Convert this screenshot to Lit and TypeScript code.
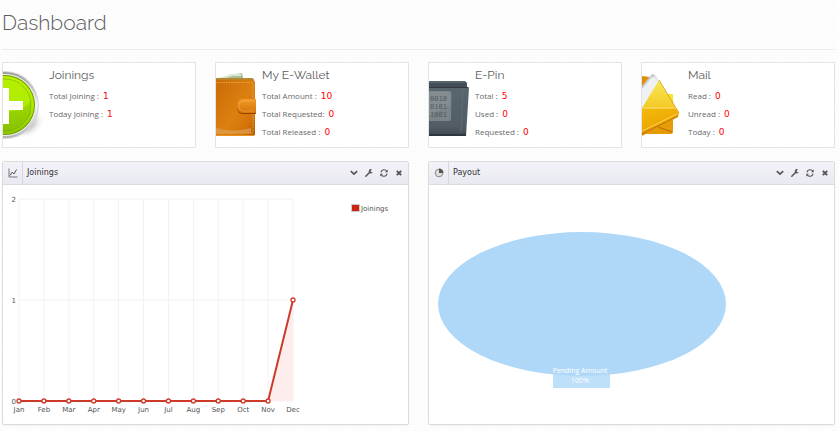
import { LitElement, html, css, svg, TemplateResult } from "lit";
import { customElement, property } from "lit/decorators.js";

type Stat = { label: string; value: number };

const plusArt = svg`
  <defs>
    <linearGradient id="rim" x1="0" y1="0" x2="0" y2="1"><stop offset="0" stop-color="#9a9a9a"/><stop offset=".5" stop-color="#f4f4f4"/><stop offset="1" stop-color="#b4b4b4"/></linearGradient>
    <linearGradient id="lime" x1="0" y1="0" x2="0" y2="1"><stop offset="0" stop-color="#b8f000"/><stop offset=".5" stop-color="#aeec00"/><stop offset="1" stop-color="#8cc800"/></linearGradient>
    <radialGradient id="shade"><stop offset=".5" stop-color="#bbb"/><stop offset="1" stop-color="#fff" stop-opacity="0"/></radialGradient>
  </defs>
  <ellipse cx="17" cy="58" rx="25" ry="18" fill="url(#shade)"/>
  <circle cx="2" cy="42" r="34" fill="#d6d6d6"/>
  <circle cx="2" cy="42" r="33" fill="url(#rim)"/>
  <circle cx="2" cy="42" r="31" fill="#f2f2f2"/>
  <circle cx="2" cy="42" r="30" fill="#6f9c00"/>
  <circle cx="2" cy="42" r="29" fill="url(#lime)"/>
  <circle cx="2" cy="42" r="26" fill="none" stroke="#7fb000" stroke-opacity=".6"/>
  <path d="M0 48C12 50 22 46 28 38V50Q20 66 0 70Z" fill="#78aa00" opacity=".3"/>
  <path d="M0 25H6V38H20V47H6V61H0Z" fill="#fff"/>`;

const walletArt = svg`
  <defs>
    <linearGradient id="hide" x1="0" y1="0" x2="1" y2="1"><stop offset="0" stop-color="#ca6c08"/><stop offset=".55" stop-color="#dc8010"/><stop offset=".8" stop-color="#d47408"/><stop offset="1" stop-color="#b45a04"/></linearGradient>
    <linearGradient id="strap" x1="0" y1="0" x2="0" y2="1"><stop offset="0" stop-color="#f09a2a"/><stop offset="1" stop-color="#d87406"/></linearGradient>
  </defs>
  <path d="M0 17L14 12L26 10L28 18Z" fill="#a9bda0"/>
  <path d="M3 16L16 12L25 12" fill="none" stroke="#dde8d2" stroke-width="2"/>
  <path d="M0 15H36Q38 15 38 18V21H0Z" fill="#b8862c"/>
  <path d="M0 17H36Q39 17 39 20V71Q39 73 37 73H0Z" fill="url(#hide)"/>
  <path d="M0 19.500H35Q37 19.500 37 22V68Q37 70.500 35 70.500H0" fill="none" stroke="#f0ae50" stroke-width=".8" stroke-dasharray="1.500 1"/>
  <path d="M0 65Q18 70 35 65V70H0Z" fill="#e0a868" opacity=".6"/>
  <path d="M0 72.500H38" stroke="#e99322"/>
  <path d="M40 37H26Q21 38 21 44Q21 50 26 51H40Z" fill="#8c4303"/>
  <path d="M40 36H26Q21 37 21 43Q21 49 26 50H40Z" fill="url(#strap)"/>
  <path d="M38 38H27Q23 39 23 43Q23 47 27 48H38" fill="none" stroke="#f8c070" stroke-width=".7" stroke-dasharray="1.500 1"/>`;

const pinArt = svg`
  <defs>
    <linearGradient id="slate" x1="0" y1="0" x2="0" y2="1"><stop offset="0" stop-color="#5a666d"/><stop offset=".8" stop-color="#515c64"/><stop offset="1" stop-color="#3d484f"/></linearGradient>
  </defs>
  <path d="M0 18H36L38 20V24H0Z" fill="#434e56"/>
  <path d="M0 19H36" stroke="#6d7a82"/>
  <path d="M0 25H40L37 73H0Z" fill="url(#slate)"/>
  <path d="M0 24.500H39.500" stroke="#2f383e"/>
  <path d="M34 27L32 70" stroke="#626e76" stroke-width=".8"/>
  <path d="M0 72H37" stroke="#2e373d" stroke-width="2"/>
  <path d="M0 28H20Q22.500 28 22.500 30.500L22 56Q22 58 20 58H0Z" fill="#7a858a"/>
  <path d="M0 29H20Q21.500 29 21.500 31L21 42L0 52Z" fill="#8a9498" opacity=".6"/>
  <g class="digits"><text x="1" y="38">0010</text><text x="1" y="46">0101</text><text x="1" y="54">1001</text></g>`;

const mailArt = svg`
  <defs>
    <linearGradient id="flap" x1="0" y1="0" x2="0" y2="1"><stop offset="0" stop-color="#f6ea58"/><stop offset="1" stop-color="#f4c31c"/></linearGradient>
    <linearGradient id="front" x1="0" y1="0" x2=".4" y2="1"><stop offset="0" stop-color="#f3bb0c"/><stop offset=".6" stop-color="#eeaa04"/><stop offset="1" stop-color="#dc8800"/></linearGradient>
  </defs>
  <path d="M18 31H31V69Q31 71 29 71H0V55Z" fill="#e69b08"/>
  <path d="M22 31H31V38H24Z" fill="#f2ea30"/>
  <path d="M10 62L30 69M18 60L31 52" stroke="#b86b00" fill="none"/>
  <path d="M0 13L8 14L0 26Z" fill="#dd8f08"/>
  <path d="M0 25L10 11L14 12L22 30V47H0Z" fill="#e6e8ec"/>
  <path d="M0 23L10 11L13 12L0 31Z" fill="#c8ccd2"/>
  <path d="M0 26L10 14L15 17V44H0Z" fill="#eff1f4"/>
  <path d="M17 17L37 50L0 46V45Z" fill="url(#flap)"/>
  <path d="M17 17L37 50" stroke="#d99a0a" stroke-width=".8"/>
  <path d="M0 45H34L37 50L36 54L0 73Z" fill="url(#front)"/>
  <path d="M0 45H34" stroke="#fbe07a"/>
  <path d="M0 71L36 53" stroke="#b96f00"/>
  <path d="M0 68L35 51" stroke="#f9d255"/>`;

const cards: { title: string; art: TemplateResult; stats: Stat[] }[] = [
  { title: "Joinings", art: plusArt, stats: [{ label: "Total Joining : ", value: 1 }, { label: "Today Joining : ", value: 1 }] },
  { title: "My E-Wallet", art: walletArt, stats: [{ label: "Total Amount : ", value: 10 }, { label: "Total Requested: ", value: 0 }, { label: "Total Released : ", value: 0 }] },
  { title: "E-Pin", art: pinArt, stats: [{ label: "Total : ", value: 5 }, { label: "Used : ", value: 0 }, { label: "Requested : ", value: 0 }] },
  { title: "Mail", art: mailArt, stats: [{ label: "Read : ", value: 0 }, { label: "Unread : ", value: 0 }, { label: "Today : ", value: 0 }] },
];

@customElement("stat-card")
export class StatCard extends LitElement {
  @property() heading = "";
  @property({ attribute: false }) art?: TemplateResult;
  @property({ attribute: false }) stats: Stat[] = [];

  static styles = css`
    :host { display: flex; background: #fff; border: 1px solid #e4e4e4; overflow: hidden; }
    .art { flex: none; width: 46px; height: 84px; }
    .digits { font: 7px "DejaVu Sans Mono", monospace; fill: #505b62; }
    .body { min-width: 0; }
    .title { margin: 4px 0 7px; font: 400 12px/16px Raleway, Lato, sans-serif; color: #5c5c5c; }
    .stats { margin: 0; padding: 0; list-style: none; display: grid; gap: 6px; color: #686868; white-space: nowrap; font: 8px/12px "Open Sans", sans-serif; }
    .value { margin-left: 2px; color: #f00; font: 9px/12px "DejaVu Sans", sans-serif; }
  `;

  render() {
    return html`
      <svg class="art" viewBox="0 0 46 84" aria-hidden="true">${this.art}</svg>
      <div class="body">
        <h2 class="title">${this.heading}</h2>
        <ul class="stats">
          ${this.stats.map((s) => html`<li>${s.label}<span class="value">${s.value}</span></li>`)}
        </ul>
      </div>`;
  }
}

const tools = [
  { name: "Collapse", icon: svg`<path d="M1.800 3.200L5 6.200L8.200 3.200" fill="none" stroke="#555" stroke-width="1.700"/>` },
  { name: "Settings", icon: svg`<path d="M1.800 8.200L6 4" fill="none" stroke="#555" stroke-width="1.500" stroke-linecap="round"/><path d="M8 1.500A2.100 2.100 0 1 0 8.800 4L7.200 4.200L6.300 3.200Z" fill="#555"/>` },
  { name: "Refresh", icon: svg`<path d="M1.900 4.300A3.200 3.200 0 0 1 7.800 3.300M8.100 5.700A3.200 3.200 0 0 1 2.200 6.700" fill="none" stroke="#555" stroke-width="1.100"/><path d="M8.700 1.500V4.200H6ZM1.300 8.500V5.800H4Z" fill="#555"/>` },
  { name: "Close", icon: svg`<path d="M2.800 2.800L7.200 7.200M7.200 2.800L2.800 7.200" fill="none" stroke="#555" stroke-width="1.900"/>` },
];

@customElement("dash-panel")
export class DashPanel extends LitElement {
  @property() heading = "";
  @property({ attribute: false }) icon?: TemplateResult;

  static styles = css`
    :host { display: block; background: #fff; border: 1px solid #dcdcdc; border-radius: 2px; box-shadow: 0 1px 1px #0000000d; overflow: hidden; }
    .head { display: flex; align-items: center; height: 22px; border-bottom: 1px solid #dcdce0; background: linear-gradient(#f3f3f9, #e9e9f1); }
    .badge { display: grid; place-items: center; align-self: stretch; width: 19px; border-right: 1px solid #d6d6dc; }
    .glyph { width: 10px; height: 10px; display: block; }
    .title { flex: 1; margin: 0 0 0 4px; font: 400 8px/14px "DejaVu Sans", sans-serif; color: #333; }
    .tools { display: flex; gap: 5px; padding-right: 4px; }
    .tool { padding: 0; border: 0; background: none; cursor: pointer; }
  `;

  render() {
    return html`
      <header class="head">
        <span class="badge"><svg class="glyph" viewBox="0 0 10 10" aria-hidden="true">${this.icon}</svg></span>
        <h2 class="title">${this.heading}</h2>
        <div class="tools">
          ${tools.map((t) => html`<button class="tool" aria-label=${t.name}><svg class="glyph" viewBox="0 0 10 10">${t.icon}</svg></button>`)}
        </div>
      </header>
      <slot></slot>`;
  }
}

const lineIcon = svg`<path d="M1 .500V9H9.500" fill="none" stroke="#777"/><path d="M2 7.500L4.200 4L6 6L8.500 1.500" fill="none" stroke="#555"/>`;
const pieIcon = svg`<circle cx="5" cy="5" r="3.800" fill="#ddd" stroke="#888"/><path d="M5 5V.500A4.500 4.500 0 0 1 9.500 5Z" fill="#555"/>`;

const months = ["Jan", "Feb", "Mar", "Apr", "May", "Jun", "Jul", "Aug", "Sep", "Oct", "Nov", "Dec"];
const joinings = [0, 0, 0, 0, 0, 0, 0, 0, 0, 0, 0, 1];
const px = (i: number) => 16 + (i * 274) / 11;
const py = (v: number) => 216 - v * 101;
const points = joinings.map((v, i) => `${px(i)},${py(v)}`).join(" ");

@customElement("app-root")
export class AppRoot extends LitElement {
  static styles = css`
    :host {
      display: block; min-height: 100vh; box-sizing: border-box; padding: 0 4px 6px 2px;
      background: radial-gradient(circle, #f8f8f8 0 1px, #fdfdfd 1px) 0 0 / 3px 3px;
    }
    .heading { margin: 0; padding: 8px 0 11px; border-bottom: 1px solid #ececec; font: 300 21px/30px Raleway, Lato, sans-serif; color: #5c5c5c; }
    .cards { display: grid; grid-template-columns: repeat(4, 1fr); gap: 19px; margin-top: 12px; }
    .panels { display: grid; grid-template-columns: repeat(2, 1fr); gap: 19px; margin-top: 13px; }
    .chart { display: block; width: 100%; height: auto; font: 7px "DejaVu Sans", sans-serif; fill: #545454; }
    .grid { stroke: #f2f2f2; fill: none; }
    .area { fill: #fdeeed; }
    .line { fill: none; stroke: #cf3a28; stroke-width: 2; stroke-linejoin: round; }
    .dot { fill: #fff; stroke: #cf3a28; stroke-width: 1.3; }
    .mid { text-anchor: middle; }
    .end { text-anchor: end; }
    .slice { fill: #afd8f8; }
    .tag { fill: #afd8f8; opacity: .8; }
    .tagtext { font-family: "Open Sans", sans-serif; fill: #fff; text-anchor: middle; }
  `;

  render() {
    return html`
      <h1 class="heading">Dashboard</h1>
      <section class="cards">
        ${cards.map((c) => html`<stat-card .heading=${c.title} .art=${c.art} .stats=${c.stats}></stat-card>`)}
      </section>
      <section class="panels">
        <dash-panel heading="Joinings" .icon=${lineIcon}>
          <svg class="chart" viewBox="0 0 405 239">
            ${months.map((_, i) => svg`<path class="grid" d="M${px(i)} 14V216"/>`)}
            ${[0, 1, 2].map((v) => svg`<path class="grid" d="M16 ${py(v)}H290"/><text class="end" x="13" y=${py(v) + 3}>${v}</text>`)}
            <polygon class="area" points="16,216 ${points} 290,216"/>
            <polyline class="line" points=${points}/>
            ${joinings.map((v, i) => svg`<circle class="dot" cx=${px(i)} cy=${py(v)} r="2"/>`)}
            ${months.map((m, i) => svg`<text class="mid" x=${px(i)} y="227">${m}</text>`)}
            <rect x="348.500" y="19.500" width="8" height="7" fill="#fff" stroke="#ccc"/>
            <rect x="349" y="20" width="7" height="6" fill="#cb2413"/>
            <text x="358" y="26">Joinings</text>
          </svg>
        </dash-panel>
        <dash-panel heading="Payout" .icon=${pieIcon}>
          <svg class="chart" viewBox="0 0 405 239">
            <ellipse class="slice" cx="153" cy="119" rx="144" ry="72"/>
            <rect class="tag" x="124" y="180" width="57" height="23"/>
            <text class="tagtext" x="151" y="188">Pending Amount</text>
            <text class="tagtext" x="151" y="198">100%</text>
          </svg>
        </dash-panel>
      </section>`;
  }
}
